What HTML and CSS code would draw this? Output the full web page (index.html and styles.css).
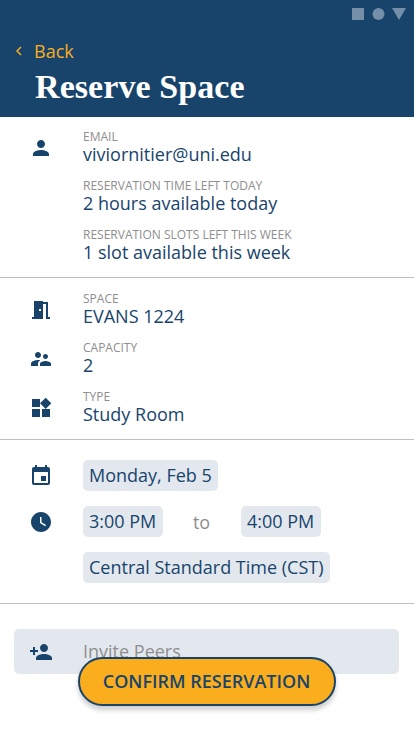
FILE: index.html
```html
<!DOCTYPE html>
<html lang="en">
<head>
<meta charset="utf-8">
<title>Reserve Space</title>
<link rel="stylesheet" href="styles.css">
</head>
<body>
<div class="screen">
  <header class="header">
    <svg class="system" width="54" height="12" viewBox="0 0 54 12"><path d="M0 0h12v12H0zM40 0h14l-7 12z"/><circle cx="26.500" cy="6" r="6"/></svg>
    <a class="back"><svg class="chevron" width="6" height="10" viewBox="0 0 6 10"><path d="M5 1L1 5l4 4"/></svg><span>Back</span></a>
    <h1 class="title">Reserve Space</h1>
  </header>
  <main>
    <section class="section">
      <div class="row">
        <svg class="icon" viewBox="0 0 24 24"><path d="M12 12c2.210 0 4-1.790 4-4s-1.790-4-4-4-4 1.790-4 4 1.790 4 4 4zm0 2c-2.670 0-8 1.340-8 4v2h16v-2c0-2.660-5.330-4-8-4z"/></svg>
        <div class="field"><div class="label">EMAIL</div><div class="value">viviornitier@uni.edu</div></div>
      </div>
      <div class="row">
        <div class="field"><div class="label">RESERVATION TIME LEFT TODAY</div><div class="value">2 hours available today</div></div>
      </div>
      <div class="row">
        <div class="field"><div class="label">RESERVATION SLOTS LEFT THIS WEEK</div><div class="value">1 slot available this week</div></div>
      </div>
    </section>
    <section class="section section-space">
      <div class="row">
        <svg class="icon" viewBox="0 0 24 24"><path d="M14 6v15H3v-2h2V3h9v1h5v15h2v2h-4V6h-3zm-4 5v2h2v-2h-2z"/></svg>
        <div class="field"><div class="label">SPACE</div><div class="value">EVANS 1224</div></div>
      </div>
      <div class="row">
        <svg class="icon" viewBox="0 0 24 24"><path d="M16.500 12c1.380 0 2.490-1.120 2.490-2.500S17.880 7 16.500 7C15.120 7 14 8.120 14 9.500s1.120 2.500 2.500 2.500zM9 11c1.660 0 2.990-1.340 2.990-3S10.660 5 9 5C7.340 5 6 6.340 6 8s1.340 3 3 3zm7.500 3c-1.830 0-5.500.92-5.500 2.750V19h11v-2.250c0-1.830-3.670-2.750-5.500-2.750zM9 13c-2.330 0-7 1.170-7 3.500V19h7v-2.250c0-.85.33-2.340 2.370-3.470C10.500 13.100 9.660 13 9 13z"/></svg>
        <div class="field"><div class="label">CAPACITY</div><div class="value">2</div></div>
      </div>
      <div class="row">
        <svg class="icon" viewBox="0 0 24 24"><path d="M13 13v8h8v-8h-8zM3 21h8v-8H3v8zM3 3v8h8V3H3zm13.660-1.310L11 7.340 16.660 13l5.660-5.660-5.660-5.650z"/></svg>
        <div class="field"><div class="label">TYPE</div><div class="value">Study Room</div></div>
      </div>
    </section>
    <section class="section section-time">
      <div class="slot">
        <svg class="icon" viewBox="0 0 24 24"><path d="M17 12h-5v5h5v-5zM16 1v2H8V1H6v2H5c-1.110 0-1.990.9-1.990 2L3 19c0 1.100.89 2 2 2h14c1.100 0 2-.9 2-2V5c0-1.100-.9-2-2-2h-1V1h-2zm3 18H5V8h14v11z"/></svg>
        <span class="chip chip-date">Monday, Feb 5</span>
      </div>
      <div class="slot">
        <svg class="icon" viewBox="0 0 24 24"><path d="M12 2C6.500 2 2 6.500 2 12s4.500 10 10 10 10-4.500 10-10S17.500 2 12 2zm4.200 14.200L11 13V7h1.500v5.200l4.500 2.700-.8 1.300z"/></svg>
        <span class="chip chip-hour">3:00 PM</span><span class="to">to</span><span class="chip chip-hour">4:00 PM</span>
      </div>
      <div class="slot">
        <span class="chip chip-zone">Central Standard Time (CST)</span>
      </div>
    </section>
    <div class="invite">
      <svg class="icon" viewBox="0 0 24 24"><path d="M15 12c2.210 0 4-1.790 4-4s-1.790-4-4-4-4 1.790-4 4 1.790 4 4 4zm-9-2V7H4v3H1v2h3v3h2v-3h3v-2H6zm9 4c-2.670 0-8 1.340-8 4v2h16v-2c0-2.660-5.330-4-8-4z"/></svg>
      <span class="placeholder">Invite Peers</span>
    </div>
  </main>
  <button class="confirm">CONFIRM RESERVATION</button>
</div>
</body>
</html>
```
FILE: styles.css
```css
* { box-sizing: border-box; }
body {
  margin: 0;
  background: #fff;
  color: #18446c;
  font-family: "Open Sans", "Noto Sans", sans-serif;
  font-size: 18px;
}
.screen {
  position: relative;
  width: 414px;
  height: 736px;
  overflow: hidden;
}
.header {
  display: flex;
  flex-direction: column;
  height: 117px;
  padding: 8px 8px 0 16px;
  background: #18446c;
}
.system { align-self: flex-end; fill: #748fa7; }
.back {
  display: flex;
  align-items: center;
  gap: 12px;
  height: 26px;
  margin-top: 18px;
  line-height: 26px;
  color: #faae1e;
}
.chevron {
  flex: none;
  margin-top: -1px;
  fill: none;
  stroke: #faae1e;
  stroke-width: 1.5;
}
.title {
  margin: 3px 0 0 19px;
  font: bold 34px/40px "Liberation Serif", serif;
  letter-spacing: 0.08px;
  color: #fff;
  white-space: nowrap;
}
.section {
  display: flex;
  flex-direction: column;
  height: 161px;
  padding-top: 11px;
  border-bottom: 1px solid #bfbfbf;
}
.section-space { height: 162px; padding-top: 12px; }
.section-time { height: 164px; padding-top: 20px; gap: 15px; }
.row { display: flex; height: 49px; padding-left: 29px; }
.row .icon { margin-top: 8px; }
.icon { flex: none; width: 24px; height: 24px; fill: #18446c; }
.field { margin-left: 30px; white-space: nowrap; }
.row > .field:first-child { margin-left: 54px; }
.label { font-size: 12px; line-height: 17px; color: #8e8e8e; }
.value { line-height: 19px; }
.slot {
  display: flex;
  align-items: center;
  height: 31px;
  padding-left: 29px;
}
.chip {
  height: 31px;
  line-height: 31px;
  padding-left: 6px;
  border-radius: 5px;
  background: #e3e8ef;
  white-space: nowrap;
}
.icon + .chip { margin-left: 30px; }
.chip-date { width: 135px; }
.chip-hour { width: 80px; }
.chip-zone { width: 247px; margin-left: 54px; }
.to { width: 78px; padding-right: 1px; text-align: center; color: #8e8e8e; }
.invite {
  display: flex;
  align-items: center;
  gap: 30px;
  height: 45px;
  margin: 25px 15px 0 14px;
  padding-left: 15px;
  border-radius: 5px;
  background: #e3e8ef;
  color: #8e8e8e;
}
.placeholder { padding-bottom: 2px; }
.confirm {
  position: absolute;
  left: 78px;
  top: 657px;
  width: 258px;
  height: 49px;
  padding: 0 1px 0 0;
  border: 2px solid #18446c;
  border-radius: 25px;
  background: #faae1e;
  box-shadow: 0 4px 5px rgba(0, 0, 0, 0.2);
  color: #18446c;
  font: 600 18px/45px "Open Sans", "Noto Sans", sans-serif;
  white-space: nowrap;
}
```
